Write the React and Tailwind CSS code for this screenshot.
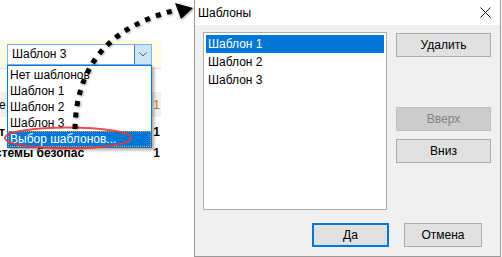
import React from "react";

const font = { fontFamily: '"Liberation Sans", Arial, sans-serif' };

const items = ["Шаблон 1", "Шаблон 2", "Шаблон 3"];

const WinButton = ({ children, disabled = false, isDefault = false, className = "" }) => (
  <div
    className={
      "flex items-center justify-center h-[24px] text-[12px] " +
      (disabled
        ? "bg-[#cccccc] border border-[#bfbfbf] text-[#838383] "
        : isDefault
        ? "bg-[#e1e1e1] border-2 border-[#0078d7] text-black "
        : "bg-[#e1e1e1] border border-[#adadad] text-black ") +
      className
    }
  >
    {children}
  </div>
);

const Background = () => (
  <div className="w-[161px] pt-[40px] text-[12px] text-black">
    <div className="h-[29px] bg-[#fdfbe6] border-b border-[#e3e3e3] pl-[7px] pt-[4px]">
      <div className="flex w-[145px] h-[21px] bg-white border border-[#7eb4ea]">
        <div className="flex-1 pl-[4px] leading-[19px]">Шаблон 3</div>
        <div className="w-[17px] h-full bg-[#cce4f7] border-l border-[#3c7fb1] flex items-center justify-center">
          <svg width="8" height="5" viewBox="0 0 8 5">
            <path d="M0.5 0.5 L4 4 L7.5 0.5" fill="none" stroke="#606060" strokeWidth="1" />
          </svg>
        </div>
      </div>
    </div>
    <div className="h-[23px]" />
    <div className="h-[25px] bg-[#f0f0f0] flex items-center justify-between pr-[1px]">
      <span className="-ml-[1px]">е</span>
      <span className="text-[#c0701a]">1</span>
    </div>
    <div className="pt-[4px] font-bold">
      <div className="h-[21px] flex items-center justify-between pr-[1px]">
        <span className="-ml-[1px]">т</span>
        <span>1</span>
      </div>
      <div className="h-[21px] flex items-center justify-between pr-[1px]">
        <span className="-ml-[5px]">стемы безопас</span>
        <span>1</span>
      </div>
    </div>
  </div>
);

const DropList = () => (
  <div className="absolute left-[7px] top-[65px] w-[145px] h-[83px] bg-white border border-[#0078d7] shadow-[2px_2px_3px_rgba(0,0,0,0.35)] text-[12px] pt-[1px]">
    {["Нет шаблонов", "Шаблон 1", "Шаблон 2", "Шаблон 3"].map((t) => (
      <div key={t} className="h-[16px] leading-[16px] pl-[2px] text-black">
        {t}
      </div>
    ))}
    <div className="h-[16px] leading-[14px] pl-[1px] bg-[#0078d7] text-white border border-dotted border-[#f0a030]">
      Выбор шаблонов...
    </div>
  </div>
);

const Dialog = () => (
  <div className="absolute left-[194px] top-0 w-[307px] h-[257px] border-x border-b border-[#9a9a9a] bg-[#f0f0f0] flex flex-col text-[12px] text-black">
    <div className="h-[25px] bg-white flex items-center justify-between pl-[3px] pr-[9px]">
      <span>Шаблоны</span>
      <svg width="11" height="11" viewBox="0 0 11 11">
        <path d="M0.5 0.5 L10.5 10.5 M10.5 0.5 L0.5 10.5" stroke="#111" strokeWidth="1" />
      </svg>
    </div>
    <div className="flex-1 flex flex-col pl-[8px] pt-[7px] pr-[9px] pb-[9px]">
      <div className="flex gap-[9px]">
        <div className="w-[184px] h-[178px] bg-white border border-[#adadad] p-[2px]">
          {items.map((t, idx) => (
            <div
              key={t}
              className={
                "h-[18px] leading-[18px] pl-[2px] " +
                (idx === 0 ? "bg-[#0078d7] text-white" : "text-black")
              }
            >
              {t}
            </div>
          ))}
        </div>
        <div className="w-[95px] pt-[1px] flex flex-col">
          <WinButton>Удалить</WinButton>
          <WinButton disabled className="mt-[50px]">
            Вверх
          </WinButton>
          <WinButton className="mt-[8px]">Вниз</WinButton>
        </div>
      </div>
      <div className="flex justify-end gap-[15px] mt-[13px] pr-[9px]">
        <WinButton isDefault className="w-[77px]">
          Да
        </WinButton>
        <WinButton className="w-[78px]">Отмена</WinButton>
      </div>
    </div>
  </div>
);

const Overlay = () => (
  <svg className="absolute inset-0 pointer-events-none" width="502" height="257" viewBox="0 0 502 257">
    <defs>
      <filter id="soft" x="-20%" y="-20%" width="140%" height="140%">
        <feDropShadow dx="1" dy="1" stdDeviation="1" floodColor="#000" floodOpacity="0.35" />
      </filter>
    </defs>
    <ellipse cx="68" cy="138" rx="63" ry="10.5" fill="none" stroke="#e8393d" strokeWidth="2" opacity="0.9" />
    <g filter="url(#soft)">
      <path
        d="M75 129 C76 75 100 30 172 11"
        fill="none"
        stroke="#000"
        strokeWidth="5"
        strokeDasharray="5 6.5"
      />
      <polygon points="175,3 193,8 181,19" fill="#000" />
    </g>
  </svg>
);

export default function App() {
  return (
    <div className="relative w-[502px] h-[257px] overflow-hidden bg-white" style={font}>
      <Background />
      <DropList />
      <Overlay />
      <Dialog />
    </div>
  );
}
